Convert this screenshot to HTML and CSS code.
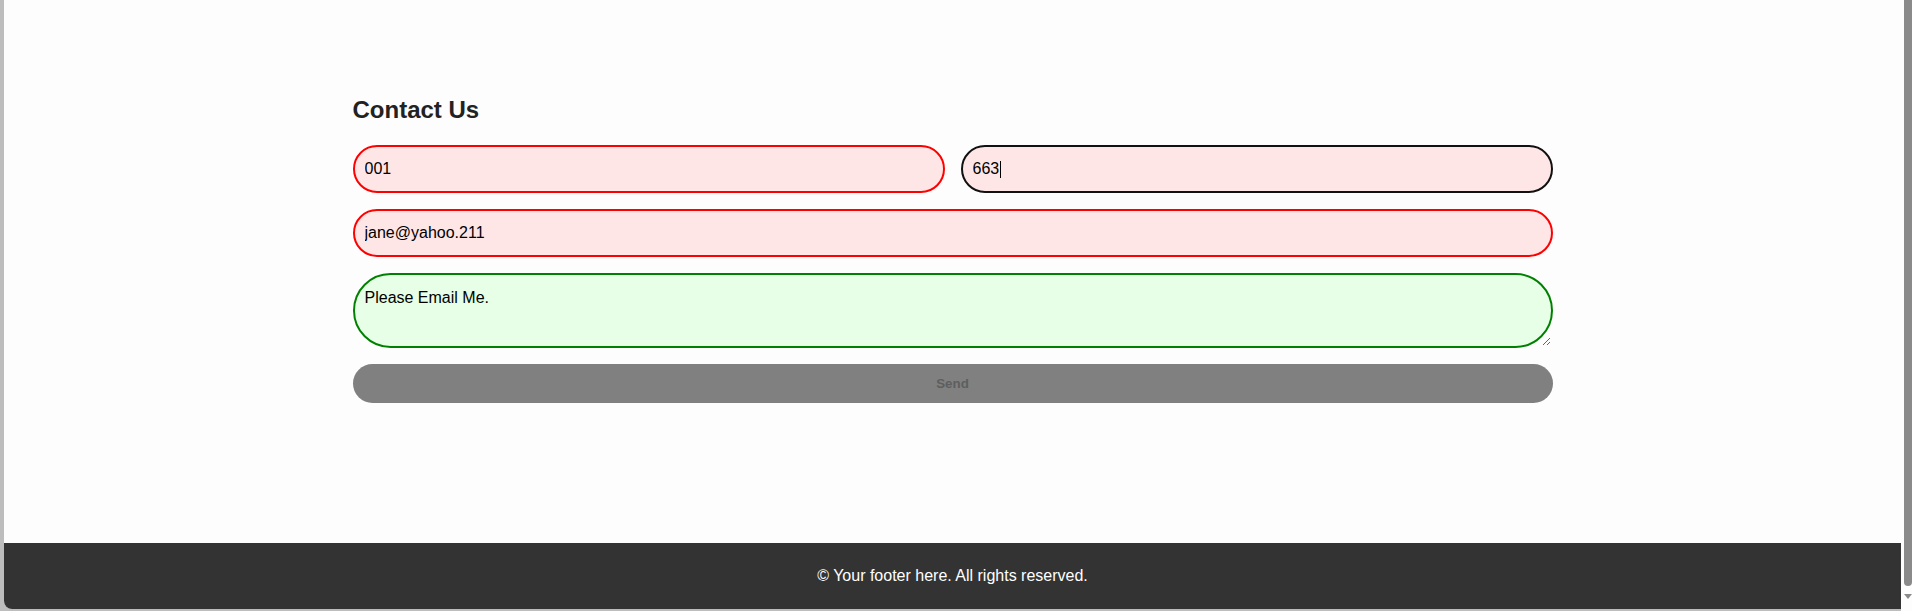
FILE: index.html
```html
<!DOCTYPE html>
<html lang="en">
<head>
<meta charset="utf-8">
<title>Contact Us</title>
<link rel="stylesheet" href="styles.css">
</head>
<body>
<div class="window">
  <div class="page">
    <main class="main">
      <section class="contact">
        <h2 class="title">Contact Us</h2>
        <form class="form">
          <div class="row">
            <input class="field invalid" type="text" value="001">
            <div class="focus-wrap">
              <input class="field invalid focused" type="text" value="663">
              <span class="caret"></span>
            </div>
          </div>
          <input class="field invalid" type="email" value="jane@yahoo.211">
          <textarea class="field valid message">Please Email Me.</textarea>
          <button class="send" type="submit" disabled>Send</button>
        </form>
      </section>
    </main>
    <footer class="footer">© Your footer here. All rights reserved.</footer>
  </div>
  <div class="scrollbar">
    <div class="thumb"></div>
    <div class="arrow"></div>
  </div>
</div>
</body>
</html>
```

FILE: styles.css
```css
* { box-sizing: border-box; }

html, body {
  margin: 0;
  padding: 0;
}

body {
  background: #bdbdbd;
  font-family: "Liberation Sans", Arial, sans-serif;
  width: 1912px;
  height: 611px;
  overflow: hidden;
}

.window {
  display: flex;
  height: 611px;
  padding-left: 4px;
  padding-bottom: 2px;
}

.page {
  flex: 1;
  display: flex;
  flex-direction: column;
  background: #fdfdfd;
  border-bottom-left-radius: 8px;
  overflow: hidden;
}

.main {
  flex: 1;
  display: flex;
  justify-content: center;
  padding-top: 96px;
}

.contact {
  width: 1200px;
}

.title {
  margin: 0 0 21px;
  font-size: 24px;
  font-weight: bold;
  line-height: 27.6px;
  color: #222;
}

.form {
  display: flex;
  flex-direction: column;
  gap: 16px;
}

.row {
  display: grid;
  grid-template-columns: 1fr 1fr;
  gap: 16px;
}

.field {
  display: block;
  width: 100%;
  height: 48px;
  margin: 0;
  padding: 13px 10px;
  font-family: "Liberation Sans", Arial, sans-serif;
  font-size: 16px;
  line-height: 18px;
  color: #000;
  border: 2px solid;
  border-radius: 50px;
  outline: none;
}

.invalid {
  border-color: #ff0000;
  background: #ffe6e6;
}

.focused {
  border-color: #111;
}

.valid {
  border-color: #008000;
  background: #e6ffe6;
}

.message {
  height: 75px;
  resize: vertical;
  padding-top: 14px;
}

.focus-wrap {
  position: relative;
}

.caret {
  position: absolute;
  left: 39px;
  top: 16px;
  width: 1px;
  height: 17px;
  background: #000;
}

.send {
  display: block;
  width: 100%;
  height: 39px;
  border: none;
  border-radius: 50px;
  background: #808080;
  color: #5e5e5e;
  font-family: "Liberation Sans", Arial, sans-serif;
  font-size: 13.33px;
  font-weight: bold;
}

.footer {
  height: 66px;
  background: #333;
  color: #fff;
  text-align: center;
  font-size: 16px;
  line-height: 18px;
  padding-top: 24px;
}

.scrollbar {
  width: 11px;
  display: flex;
  flex-direction: column;
  align-items: flex-end;
  background: #fdfdfd;
  margin-bottom: -2px;
}

.thumb {
  width: 8px;
  height: 586px;
  background: #8a8a8a;
  border-radius: 0 0 4px 4px;
}

.arrow {
  margin-top: 8px;
  width: 0;
  height: 0;
  border-left: 4px solid transparent;
  border-right: 4px solid transparent;
  border-top: 5px solid #8a8a8a;
}
```
